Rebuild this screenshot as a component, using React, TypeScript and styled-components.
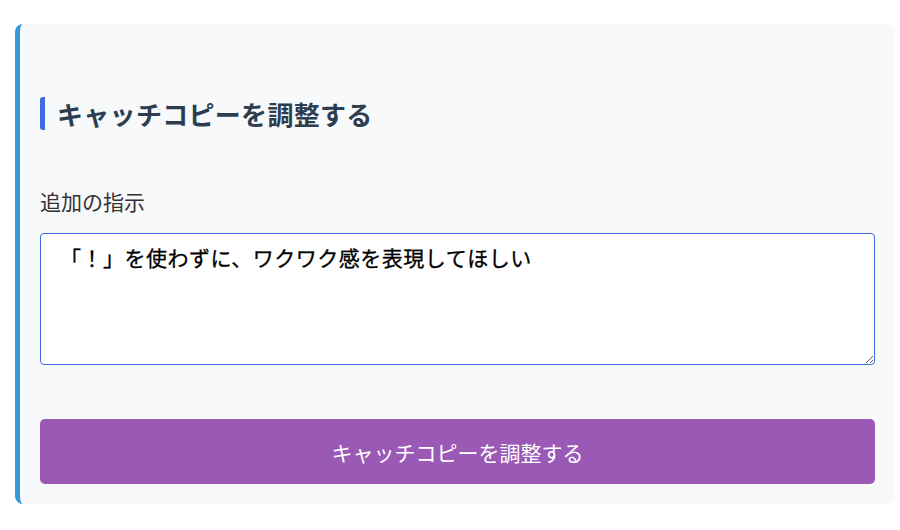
import React, { useState } from "react";
import styled, { createGlobalStyle } from "styled-components";

const Global = createGlobalStyle`
  html, body { margin: 0; padding: 0; background: #ffffff; }
  body { font-family: "Noto Sans CJK JP", "Noto Sans", sans-serif; }
  * { box-sizing: border-box; }
`;

const Page = styled.div`
  padding: 24px 5px 0 15px;
`;

const Card = styled.section`
  background: #f8f9fa;
  border-left: 5px solid #3498db;
  border-radius: 8px;
  padding: 73px 20px 20px 20px;
  display: flex;
  flex-direction: column;
`;

const Heading = styled.h2`
  margin: 0;
  font-size: 26px;
  letter-spacing: 0.3px;
  line-height: 33px;
  font-weight: 700;
  color: #2c3e50;
  border-left: 5px solid #4169e1;
  border-radius: 3px 0 0 3px;
  padding-left: 12px;
`;

const Label = styled.label`
  margin-top: 56px;
  font-size: 21px;
  line-height: 30px;
  color: #333;
`;

const TextArea = styled.textarea`
  margin-top: 17px;
  width: 100%;
  height: 132px;
  border: 1px solid #4169e1;
  border-radius: 4px;
  background: #ffffff;
  padding: 8px 14px 8px 19px;
  font-family: "Noto Sans CJK JP", "Noto Sans", sans-serif;
  font-size: 21px;
  letter-spacing: 0.5px;
  font-weight: 400;
  line-height: 30px;
  color: #000;
  -webkit-text-stroke: 0.3px #000;
  resize: vertical;
  outline: none;
`;

const Button = styled.button`
  margin-top: 54px;
  height: 65px;
  border: none;
  border-radius: 5px;
  background: #9b59b6;
  color: #ffffff;
  font-family: "Noto Sans CJK JP", "Noto Sans", sans-serif;
  font-size: 21px;
  cursor: pointer;
`;

export default function App() {
  const [text, setText] = useState("「！」を使わずに、ワクワク感を表現してほしい");
  return (
    <>
      <Global />
      <Page>
        <Card>
          <Heading>キャッチコピーを調整する</Heading>
          <Label htmlFor="instr">追加の指示</Label>
          <TextArea id="instr" value={text} onChange={(e) => setText(e.target.value)} />
          <Button type="button">キャッチコピーを調整する</Button>
        </Card>
      </Page>
    </>
  );
}
